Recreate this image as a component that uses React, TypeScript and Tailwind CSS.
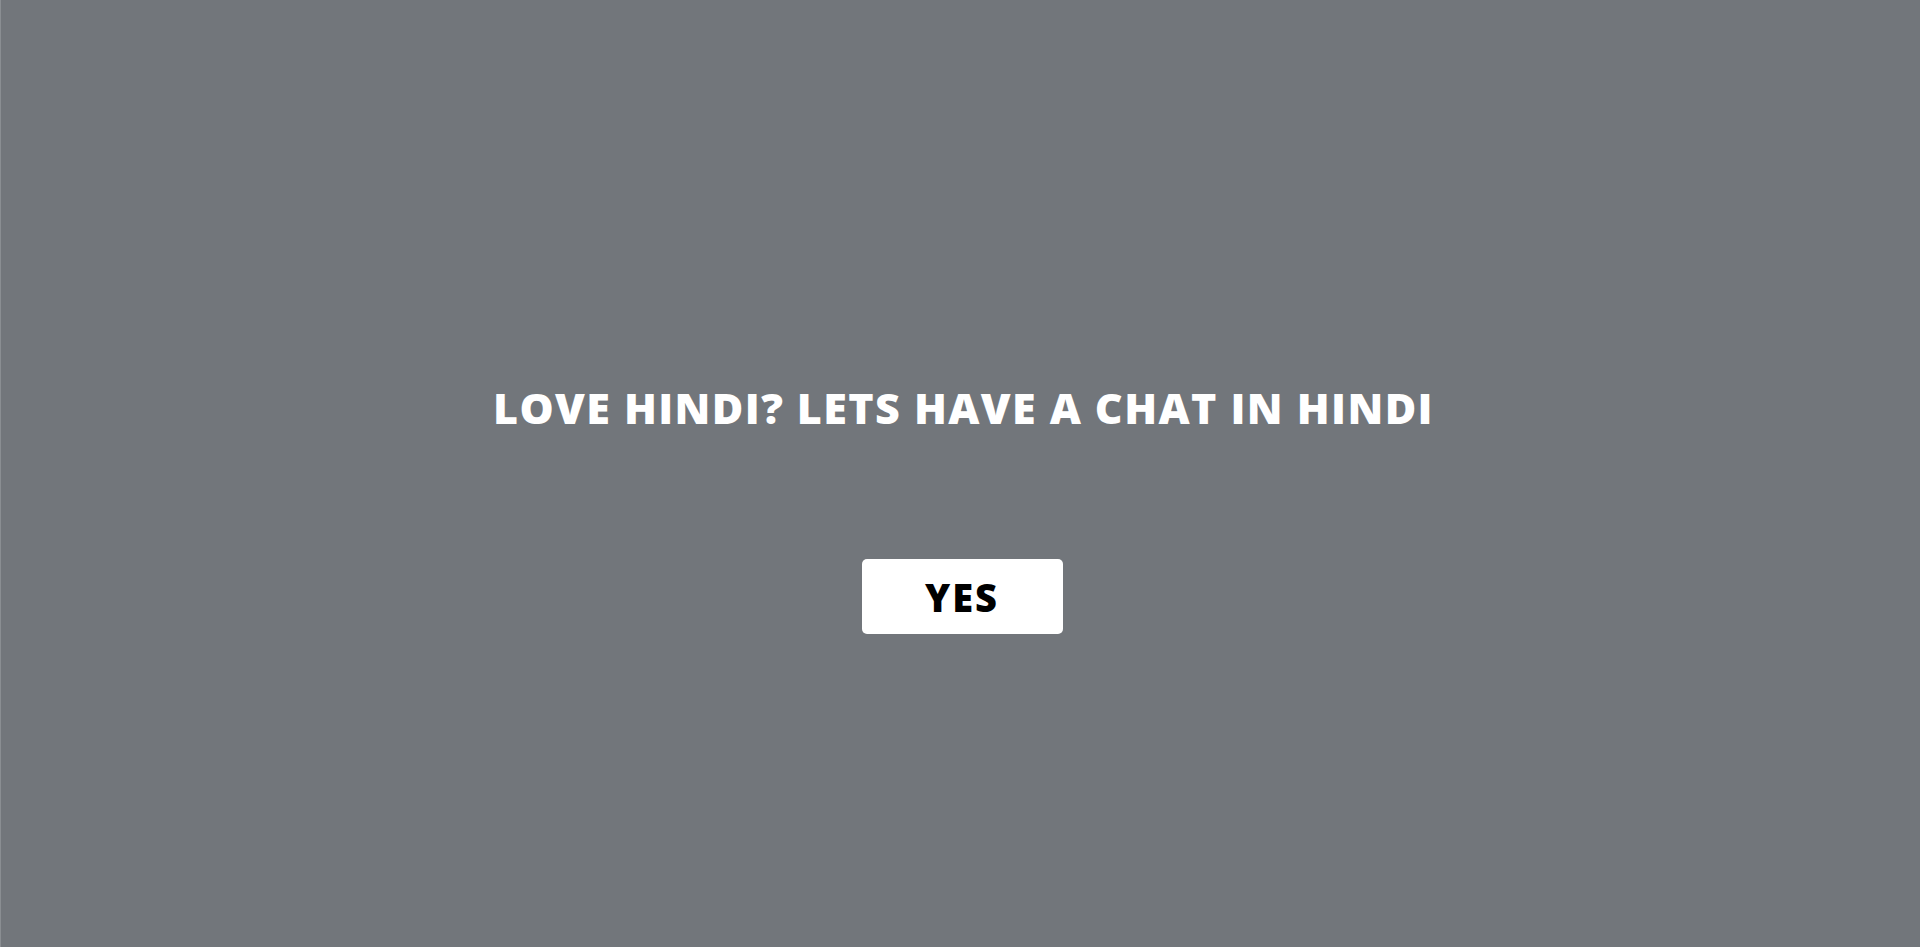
export default function App() {
  return (
    <div className="w-[1920px] h-[947px] bg-[#72767b] flex flex-col items-center border-l border-[#8a8e92]" style={{ fontFamily: '"Open Sans", "Noto Sans", sans-serif' }}>
      <h1 className="mt-[384px] text-white font-extrabold text-[43px] leading-[48px] tracking-[1.4px] whitespace-nowrap pl-[6px]">
        LOVE HINDI? LETS HAVE A CHAT IN HINDI
      </h1>
      <button className="mt-[127px] ml-[3px] w-[201px] h-[75px] bg-white rounded-[5px] text-black font-extrabold text-[38px] tracking-[2px] leading-none flex items-center justify-center pl-[0px]">
        YES
      </button>
    </div>
  );
}
